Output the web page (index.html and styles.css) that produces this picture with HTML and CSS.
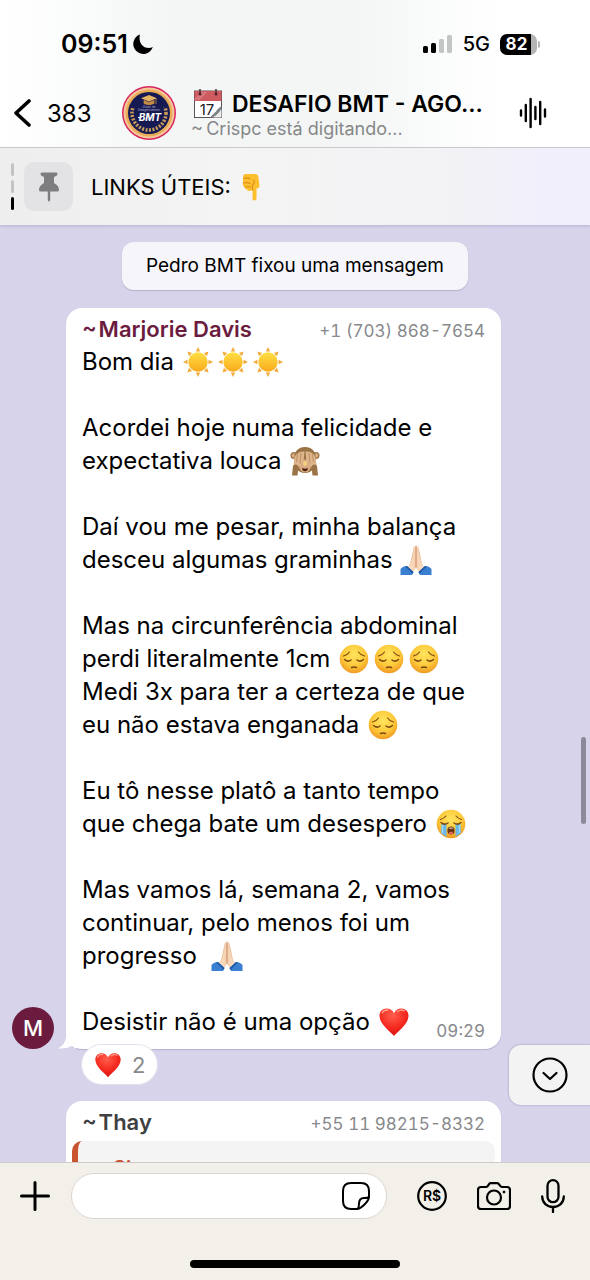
FILE: index.html
```
<!DOCTYPE html>
<html lang="pt-BR">
<head>
    <meta charset="UTF-8">
    <meta name="viewport" content="width=device-width, initial-scale=1.0">
    <title>DESAFIO BMT</title>
    <link rel="stylesheet" href="styles.css">
</head>
<body>
<!-- emoji and icons used more than once -->
<svg class="sprite" aria-hidden="true">
    <defs>
        <radialGradient id="face" cx="50%" cy="35%" r="65%">
            <stop offset="0" stop-color="#ffe55e"/>
            <stop offset="0.6" stop-color="#fdc93a"/>
            <stop offset="1" stop-color="#ef9a22"/>
        </radialGradient>
        <linearGradient id="sunfill" x1="0" y1="0" x2="0" y2="1">
            <stop offset="0" stop-color="#fee045"/>
            <stop offset="1" stop-color="#f9a91c"/>
        </linearGradient>
        <radialGradient id="heartfill" cx="45%" cy="25%" r="75%">
            <stop offset="0" stop-color="#ff5f4f"/>
            <stop offset="0.6" stop-color="#f5291f"/>
            <stop offset="1" stop-color="#d91410"/>
        </radialGradient>
        <linearGradient id="skin" x1="0" y1="0" x2="1" y2="0">
            <stop offset="0" stop-color="#fde6cd"/>
            <stop offset="0.5" stop-color="#f3cfae"/>
            <stop offset="1" stop-color="#fde6cd"/>
        </linearGradient>
    </defs>
    <symbol id="sun" viewBox="0 0 32 32">
        <g fill="#f3ab3c">
            <path id="ray" d="M13.800 5.500L16 1L18.200 5.500Z"/>
            <use href="#ray" transform="rotate(45 16 16)"/>
            <use href="#ray" transform="rotate(90 16 16)"/>
            <use href="#ray" transform="rotate(135 16 16)"/>
            <use href="#ray" transform="rotate(180 16 16)"/>
            <use href="#ray" transform="rotate(225 16 16)"/>
            <use href="#ray" transform="rotate(270 16 16)"/>
            <use href="#ray" transform="rotate(315 16 16)"/>
        </g>
        <circle cx="16" cy="16" r="9.700" fill="url(#sunfill)"/>
    </symbol>
    <symbol id="pensive" viewBox="0 0 32 32">
        <circle cx="16" cy="16" r="14.300" fill="url(#face)"/>
        <g fill="none" stroke="#7a4a12" stroke-width="1.500" stroke-linecap="round">
            <path d="M6.500 16.500Q10 19.500 13 17"/>
            <path d="M19 17Q22 19.500 25.500 16.500"/>
            <path d="M5.500 13Q9.500 12 11.500 9" stroke-width="1.100"/>
            <path d="M26.500 13Q22.500 12 20.500 9" stroke-width="1.100"/>
            <path d="M13.500 24.500Q16 23.300 18.500 24.500"/>
        </g>
    </symbol>
    <symbol id="sob" viewBox="0 0 32 32">
        <circle cx="16" cy="16" r="14.300" fill="url(#face)"/>
        <path d="M6.500 16H11.500V28.500Q8.500 27 6 25ZM20.500 16H25.500L26 25Q23.500 27 20.500 28.500Z" fill="#6ab7e8"/>
        <path d="M7.500 17V25M24.500 17V25" stroke="#a5dcf8" stroke-width="1.200"/>
        <ellipse cx="16" cy="22.500" rx="3.600" ry="4" fill="#6a3412"/>
        <path d="M13.400 20.500Q16 18.600 18.600 20.500Z" fill="#fff"/>
        <ellipse cx="16" cy="25" rx="2" ry="1.200" fill="#ea6a62"/>
        <g fill="none" stroke="#7a4a12" stroke-width="1.500" stroke-linecap="round">
            <path d="M6 14.500Q9.500 17.500 13 15"/>
            <path d="M19 15Q22.500 17.500 26 14.500"/>
            <path d="M5.500 11.500Q9 10.500 11 8" stroke-width="1.100"/>
            <path d="M26.500 11.500Q23 10.500 21 8" stroke-width="1.100"/>
        </g>
    </symbol>
    <symbol id="monkey" viewBox="0 0 32 32">
        <circle cx="5" cy="10.500" r="3.500" fill="#a07a4b"/>
        <circle cx="27" cy="10.500" r="3.500" fill="#a07a4b"/>
        <circle cx="5" cy="10.500" r="2" fill="#e3b58c"/>
        <circle cx="27" cy="10.500" r="2" fill="#e3b58c"/>
        <path d="M16 2C8 2 5 8 5 14C5 21 8 28 16 28S27 21 27 14C27 8 24 2 16 2Z" fill="#9a7446"/>
        <ellipse cx="16" cy="21" rx="6" ry="6.500" fill="#d9ac82"/>
        <path d="M13 23Q16 24.500 19 23Q18.500 26.300 16 26.300T13 23Z" fill="#4a2014"/>
        <path d="M15.500 6.500L14.500 17L10.500 21L8 24H4L5.500 12Q8.500 6 15.500 6.500ZM16.500 6.500L17.500 17L21.500 21L24 24H28L26.500 12Q23.500 6 16.500 6.500Z" fill="#dfb68c"/>
        <path d="M3 30.500L4 21Q7 18 9.500 21.500L8.500 30.500ZM29 30.500L28 21Q25 18 22.500 21.500L23.500 30.500Z" fill="#9a7446"/>
        <path d="M8.500 9L7.500 17M12 8L11 18.500M23.500 9L24.500 17M20 8L21 18.500" stroke="#b98b61" stroke-width="0.900" fill="none"/>
        <ellipse cx="16" cy="18.500" rx="1.800" ry="2.500" fill="#f5d27e"/>
    </symbol>
    <symbol id="pray" viewBox="0 0 32 32">
        <path d="M15.500 1.500Q16 0.500 16.500 1.500L20 10L21.500 20L25 25.500L20 29.500L16 24L12 29.500L7 25.500L10.500 20L12.500 10Z" fill="url(#skin)"/>
        <path d="M14.300 2.500L12.800 10L10.500 20L7.200 25.500M17.700 2.500L19.500 10L21.500 20L24.800 25.500" fill="none" stroke="#eec09a" stroke-width="0.900"/>
        <path d="M16 2.500V23.500" stroke="#c98862" stroke-width="1"/>
        <path d="M7 22L13.500 28L12 31H0.500V25Q3 22 7 22ZM25 22L18.500 28L20 31H31.500V25Q29 22 25 22Z" fill="#3b7fd0"/>
        <path d="M7 22L13.500 28L12.500 30Q9 26 5 22.500ZM25 22L18.500 28L19.500 30Q23 26 27 22.500Z" fill="#235ca6"/>
    </symbol>
    <symbol id="heart" viewBox="0 0 32 32">
        <path d="M16 30C13 26 1.500 18.500 1.500 9.800C1.500 5.500 4.700 2.500 8.600 2.500C12 2.500 14.800 4.300 16 7.200C17.200 4.300 20 2.500 23.400 2.500C27.300 2.500 30.500 5.500 30.500 9.800C30.500 18.500 19 26 16 30Z" fill="url(#heartfill)"/>
        <path d="M4 7Q6 3.700 10 4M19.500 5.500Q23 3 26.500 4.800" fill="none" stroke="#ff9d8c" stroke-width="1.400" stroke-linecap="round"/>
    </symbol>
</svg>

<header>
    <div class="status">
        <div class="clock">
            <span>09:51</span>
            <svg width="20" height="20" viewBox="0 0 20 20"><path d="M7 0.500A10 10 0 1 0 19.800 13C17 14.500 12.500 14.500 9.500 11.500C6.500 8.500 6 4 7 0.500Z"/></svg>
        </div>
        <div class="signal">
            <svg width="30" height="18" viewBox="0 0 30 18">
                <rect x="0" y="11" width="5" height="7" rx="1.500"/>
                <rect x="8" y="8" width="5" height="10" rx="1.500"/>
                <rect x="16" y="4" width="5" height="14" rx="1.500" fill="#c4c5c5"/>
                <rect x="24" y="0" width="5" height="18" rx="1.500" fill="#c4c5c5"/>
            </svg>
            <span>5G</span>
            <span class="battery">82</span>
        </div>
    </div>
    <nav>
        <button class="back" aria-label="Voltar, 383">
            <svg width="18" height="30" viewBox="0 0 18 30"><path d="M15 3L2 15L15 27" fill="none" stroke="#000" stroke-width="3.600" stroke-linecap="round" stroke-linejoin="round"/></svg>
            383
        </button>
        <svg class="avatar" width="54" height="54" viewBox="0 0 54 54">
            <circle cx="27" cy="27" r="27" fill="#d7265c"/>
            <circle cx="27" cy="27" r="25.500" fill="#f6c79a"/>
            <circle cx="27" cy="27" r="23.500" fill="#e8ab58"/>
            <circle cx="27" cy="27" r="21" fill="#161a52"/>
            <clipPath id="laurel"><path d="M0 21H54V54H0Z"/></clipPath>
            <circle cx="27" cy="27" r="17" fill="none" stroke="#c99a58" stroke-width="3.600" stroke-dasharray="2 1.500" clip-path="url(#laurel)"/>
            <path d="M27 9L35 12.300L27 15.500L19 12.300Z" fill="#e6b564"/>
            <path d="M22 14.500V17.500Q27 20 32 17.500V14.500L27 16.500ZM34 12.500V18" fill="#c58d43" stroke="#c58d43" stroke-width="0.800"/>
            <text x="27" y="22" class="logo-small">Grupo de</text>
            <text x="27" y="25" class="logo-small">Emagrecimento</text>
            <text x="28" y="35" class="logo-name">BMT</text>
            <path d="M16 31.500H19.500" stroke="#fff" stroke-width="1"/>
        </svg>
        <div class="chat-title">
            <h1>
                <svg width="30" height="30" viewBox="0 0 30 30">
                    <rect x="1.500" y="2" width="27" height="26.500" fill="#fff" stroke="#5a5150" stroke-width="1"/>
                    <rect x="1.500" y="2" width="27" height="10" fill="#cf5a60"/>
                    <path d="M2 11L10 3M5 11L13 3" stroke="#dc8588" stroke-width="1.500"/>
                    <path d="M7 0V4M23 0V4" stroke="#4a3030" stroke-width="1.500"/>
                    <circle cx="7" cy="5" r="1.500" fill="#5b2027"/>
                    <circle cx="23" cy="5" r="1.500" fill="#5b2027"/>
                    <text x="14" y="25.500" class="cal-day">17</text>
                    <path d="M28.500 17Q24 20 23 22.500Q20 25 17 28.500H20Q26 25 28.500 20Z" fill="#7f8488"/>
                    <path d="M20 28.500Q26 25 28.500 20V28.500Z" fill="#eceded"/>
                </svg>
                <span>DESAFIO BMT - AGO...</span>
            </h1>
            <p>~&thinsp;Crispc está digitando...</p>
        </div>
        <button aria-label="Chat de voz">
            <svg width="28" height="32" viewBox="0 0 28 32"><path d="M2 13.500V18.500M6.800 8V24M11.600 2V30M16.400 10V22M21.200 5V27M26 12.500V19.500" stroke="#000" stroke-width="2.400" stroke-linecap="round"/></svg>
        </button>
    </nav>
</header>

<section class="pinned">
    <div class="dashes"><i></i><i></i><i class="on"></i></div>
    <div class="pin">
        <svg width="20" height="30" viewBox="0 0 20 30"><path d="M2.500 0.500H17.500Q18.500 0.500 18.500 2T17 4L15 5V11Q20 13.500 20 18Q20 19.500 18.500 19.500H11.200V28L10 30L8.800 28V19.500H1.500Q0 19.500 0 18Q0 13.500 5 11V5L3 4Q1.500 3.500 1.500 2T2.500 0.500Z" fill="#7d7d7f"/></svg>
    </div>
    <span>LINKS ÚTEIS:</span>
    <svg width="18" height="28" viewBox="0 0 18 28">
        <path d="M1 4Q1 1 4 1H13Q16.500 1 16.500 5L17.500 12Q17.500 15.500 15 15.500L14.500 15V25.500Q14.500 27.500 12.500 27.500T10.500 25.500V17L8 18Q5.500 18.500 5 16.500Q2.500 16 2.500 14Q0.500 13 0.800 10.500Z" fill="#fcc02f"/>
        <path d="M2 5.500Q6 4 8 6M1.500 10Q5 9 8 10.500M3 14Q6 13 8.500 14M10.500 17V12Q13 10 12 7" fill="none" stroke="#dd8a1b" stroke-width="1.100" stroke-linecap="round"/>
    </svg>
</section>

<main>
    <div class="notice">Pedro BMT fixou uma mensagem</div>

    <div class="row">
        <div class="initial">M</div>
        <article class="bubble">
            <svg class="tail" width="18" height="14" viewBox="0 0 18 14"><path d="M8 0V2Q7 10 0 13.500Q8 14 14 11L18 14V0Z" fill="#fff"/></svg>
            <div class="sender">
                <strong class="marjorie">~&hairsp;Marjorie Davis</strong>
                <span>+1 (703) 868-7654</span>
            </div>
            <p class="text">Bom dia <svg class="emoji"><use href="#sun"/></svg><svg class="emoji"><use href="#sun"/></svg><svg class="emoji"><use href="#sun"/></svg><br>
                <br>
                Acordei hoje numa felicidade e<br>
                expectativa louca <svg class="emoji"><use href="#monkey"/></svg><br>
                <br>
                Daí vou me pesar, minha balança<br>
                desceu algumas graminhas <svg class="emoji"><use href="#pray"/></svg><br>
                <br>
                Mas na circunferência abdominal<br>
                perdi literalmente 1cm <svg class="emoji"><use href="#pensive"/></svg><svg class="emoji"><use href="#pensive"/></svg><svg class="emoji"><use href="#pensive"/></svg><br>
                Medi 3x para ter a certeza de que<br>
                eu não estava enganada <svg class="emoji"><use href="#pensive"/></svg><br>
                <br>
                Eu tô nesse platô a tanto tempo<br>
                que chega bate um desespero <svg class="emoji"><use href="#sob"/></svg><br>
                <br>
                Mas vamos lá, semana 2, vamos<br>
                continuar, pelo menos foi um<br>
                progresso &nbsp;<svg class="emoji"><use href="#pray"/></svg><br>
                <br>
                Desistir não é uma opção <svg class="emoji"><use href="#heart"/></svg></p>
            <time>09:29</time>
            <button class="reaction"><svg width="28" height="28"><use href="#heart"/></svg>2</button>
        </article>
    </div>

    <div class="row no-avatar">
        <article class="bubble">
            <div class="sender">
                <strong>~&hairsp;Thay</strong>
                <span>+55 11 98215-8332</span>
            </div>
            <blockquote>~&hairsp;Si</blockquote>
        </article>
    </div>

    <div class="thumb"></div>
    <button class="scroll-down" aria-label="Ir para o fim">
        <svg width="36" height="36" viewBox="0 0 36 36" fill="none" stroke="#000" stroke-width="2.200" stroke-linecap="round" stroke-linejoin="round"><circle cx="18" cy="18" r="16.500"/><path d="M11.500 16L18 22L24.500 16"/></svg>
    </button>
</main>

<footer>
    <div class="composer">
        <button aria-label="Anexar">
            <svg width="30" height="30" viewBox="0 0 30 30"><path d="M15 1.500V28.500M1.500 15H28.500" stroke="#000" stroke-width="3" stroke-linecap="round"/></svg>
        </button>
        <div class="field">
            <input type="text" aria-label="Mensagem">
            <button aria-label="Figurinhas">
                <svg width="28" height="28" viewBox="0 0 28 28" fill="none" stroke="#000" stroke-width="2" stroke-linejoin="round"><path d="M27 15V9Q27 1 19 1H9Q1 1 1 9V19Q1 27 9 27H15Q18 27 22.500 22.500T27 15ZM15.500 27Q17 25.500 17 22Q17 16 22 16Q26 16 27 15"/></svg>
            </button>
        </div>
        <div class="tools">
            <button aria-label="Pagamento">
                <svg width="30" height="30" viewBox="0 0 30 30"><circle cx="15" cy="15" r="13.800" fill="none" stroke="#000" stroke-width="2.200"/><text x="15" y="20" class="money">R$</text></svg>
            </button>
            <button aria-label="Câmera">
                <svg width="34" height="28" viewBox="0 0 34 28" fill="none" stroke="#000" stroke-width="2.200" stroke-linejoin="round"><path d="M4 5H9Q10.500 5 11.500 3T14 1.200H20Q21.500 1.200 22.500 3T25 5H30Q33 5 33 8V24Q33 27 30 27H4Q1 27 1 24V8Q1 5 4 5Z"/><circle cx="17" cy="15.500" r="7"/><circle cx="27" cy="10" r="1" fill="#000" stroke-width="1"/></svg>
            </button>
            <button aria-label="Gravar áudio">
                <svg width="24" height="34" viewBox="0 0 24 34" fill="none" stroke="#000" stroke-width="2.300" stroke-linecap="round"><rect x="6.500" y="1.200" width="11" height="22" rx="5.500"/><path d="M1.200 17.500C1.200 24 6 28 12 28S22.800 24 22.800 17.500M12 28V33"/></svg>
            </button>
        </div>
    </div>
    <div class="home"></div>
</footer>
</body>
</html>
```
FILE: styles.css
```
* {
    box-sizing: border-box;
    margin: 0;
    padding: 0;
}

body {
    display: flex;
    flex-direction: column;
    height: 100vh;
    overflow: hidden;
    font-family: Inter, "Liberation Sans", sans-serif;
    font-size: 24px;
    color: #000;
    background-color: #d7d3ea;
}

button {
    display: flex;
    align-items: center;
    border: none;
    background: none;
    font: inherit;
    color: inherit;
    cursor: pointer;
}

svg {
    display: block;
    flex: none;
}

.sprite {
    position: absolute;
    width: 0;
    height: 0;
}

/* top bars */
header {
    background: linear-gradient(to right, #fff, #f4f6f6 30%, #f4f6f6 60%, #fff 85%);
    border-bottom: 1px solid #cfcfd2;
}

.status {
    display: flex;
    justify-content: space-between;
    align-items: center;
    height: 84px;
    padding: 4px 53px 0 61px;
}

.clock,
.signal {
    display: flex;
    align-items: center;
    font-size: 25px;
    font-weight: 600;
    gap: 5px;
}

.signal {
    font-size: 20px;
    font-weight: 500;
    gap: 10px;
}

.battery {
    position: relative;
    width: 37px;
    padding-right: 4px;
    line-height: 21px;
    border-radius: 7px;
    text-align: center;
    font-size: 17px;
    font-weight: 700;
    color: #fff;
    background: linear-gradient(to right, #000 84%, #b4b4b5 84%);
}

.battery::after {
    content: "";
    position: absolute;
    left: 38px;
    top: 7px;
    width: 2px;
    height: 7px;
    border-radius: 0 2px 2px 0;
    background-color: #b4b4b5;
}

nav {
    display: grid;
    grid-template-columns: 108px 54px 1fr auto;
    align-items: center;
    height: 63px;
    padding: 0 43px 5px 14px;
}

.back {
    gap: 15px;
}

.logo-small {
    font: italic 3px Inter, sans-serif;
    fill: #b9b5d8;
    text-anchor: middle;
}

.logo-name {
    font: italic 700 10px Inter, sans-serif;
    fill: #fff;
    text-anchor: middle;
}

.cal-day {
    font: 15px Inter, sans-serif;
    fill: #222;
    text-anchor: middle;
}

.chat-title {
    padding-left: 15px;
    white-space: nowrap;
}

.chat-title h1 {
    display: flex;
    align-items: center;
    gap: 9px;
    padding-left: 2px;
    font-size: 23px;
    font-weight: 600;
    line-height: 28px;
}

.chat-title p {
    font-size: 18px;
    line-height: 19px;
    color: #858788;
}

.pinned {
    display: flex;
    align-items: center;
    height: 77px;
    padding-left: 11px;
    font-size: 22px;
    background: linear-gradient(to right, #efeeef, #f4f4f4 40%, #f2f1f5 80%, #f1effc 92%);
    box-shadow: 0 1px 3px rgba(90, 80, 140, 0.25);
    z-index: 1;
}

.pinned span {
    margin: 0 11px 0 18px;
}

.dashes {
    display: flex;
    flex-direction: column;
    gap: 4px;
    margin-right: 10px;
}

.dashes i {
    width: 3px;
    height: 13px;
    border-radius: 2px;
    background-color: #c3c2c5;
}

.dashes .on {
    background-color: #000;
}

.pin {
    display: grid;
    place-items: center;
    width: 49px;
    height: 49px;
    border-radius: 10px;
    background-color: #e3e2e4;
}

/* messages */
main {
    position: relative;
    flex: 1;
    min-height: 0;
    overflow: hidden;
    padding: 17px 12px 0;
}

.notice {
    width: fit-content;
    margin: 0 auto 18px;
    padding: 0 24px;
    border-radius: 12px;
    font-size: 19px;
    line-height: 48px;
    background-color: #f6f5fa;
    box-shadow: 0 1px 1px rgba(80, 70, 120, 0.25);
}

.row {
    display: flex;
    align-items: flex-end;
    gap: 12px;
    margin-bottom: 52px;
    padding-right: 77px;
}

.no-avatar {
    padding-left: 54px;
}

.initial {
    width: 42px;
    border-radius: 50%;
    text-align: center;
    font-size: 22px;
    font-weight: 500;
    line-height: 42px;
    color: #fff;
    background-color: #6b1c3e;
}

.bubble {
    position: relative;
    flex: 1;
    padding: 5px 16px 11px;
    border-radius: 16px;
    background-color: #fff;
    box-shadow: 0 1px 1px rgba(80, 70, 120, 0.25);
}

.tail {
    position: absolute;
    left: -8px;
    bottom: 0;
}

.sender {
    display: flex;
    justify-content: space-between;
    align-items: baseline;
    height: 32px;
    line-height: 32px;
}

.sender strong {
    font-size: 22px;
    font-weight: 600;
    color: #3f4042;
}

.sender .marjorie {
    color: #6b1c3e;
}

.sender span,
time {
    font-size: 17px;
    font-variant-numeric: tabular-nums;
    color: #88898c;
}

.text {
    line-height: 33px;
    white-space: nowrap;
}

.emoji {
    display: inline-block;
    width: 32px;
    height: 32px;
    margin: -6px 2px -4px 1px;
    vertical-align: middle;
}

time {
    position: absolute;
    right: 16px;
    bottom: 8px;
}

.reaction {
    position: absolute;
    left: 16px;
    top: calc(100% - 4px);
    gap: 10px;
    height: 39px;
    padding: 0 12px;
    border-radius: 20px;
    font-size: 22px;
    color: #88898c;
    background-color: #fff;
    box-shadow: 0 0 0 1px #e4e1ee;
}

blockquote {
    height: 60px;
    margin: 3px -10px 0;
    padding: 15px 20px;
    border-left: 6px solid #c8552f;
    border-radius: 10px;
    font-size: 20px;
    font-weight: 600;
    color: #c8552f;
    background-color: #f4f4f4;
}

.thumb {
    position: absolute;
    right: 4px;
    top: 512px;
    width: 5px;
    height: 87px;
    border-radius: 3px;
    background-color: #8c8998;
}

.scroll-down {
    position: absolute;
    right: 0;
    bottom: 57px;
    width: 81px;
    height: 60px;
    padding-left: 23px;
    border-radius: 12px 0 0 12px;
    background-color: #f4f3f4;
    box-shadow: 0 0 2px rgba(80, 70, 120, 0.5);
}

/* bottom bar */
footer {
    padding: 10px 0 12px;
    border-top: 1px solid #d3cbcb;
    background-color: #f3f0e9;
}

.composer {
    display: flex;
    align-items: center;
    gap: 21px;
    padding: 0 25px 0 20px;
}

.field {
    display: flex;
    align-items: center;
    flex: 1;
    min-width: 0;
    height: 46px;
    padding: 0 16px;
    border: 1px solid #ddd5d3;
    border-radius: 23px;
    background-color: #fff;
}

.field input {
    flex: 1;
    width: 100%;
    min-width: 0;
    border: none;
    outline: none;
    background: none;
    font: inherit;
}

.tools {
    display: flex;
    align-items: center;
    gap: 30px;
    padding-left: 9px;
}

.money {
    font: 600 14px Inter, sans-serif;
    text-anchor: middle;
}

.home {
    width: 210px;
    height: 8px;
    margin: 41px auto 0;
    border-radius: 4px;
    background-color: #000;
}
```
